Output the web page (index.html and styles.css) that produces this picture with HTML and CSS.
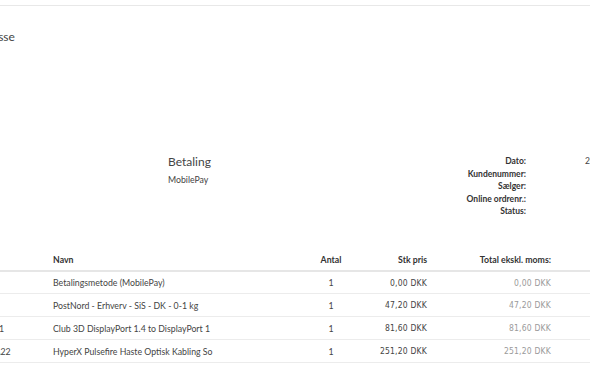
FILE: index.html
```html
<!DOCTYPE html>
<html lang="da">
<head>
    <meta charset="UTF-8" />
    <meta name="viewport" content="width=device-width, initial-scale=1" />
    <title>Ordre | Faktura</title>
    <link rel="stylesheet" href="styles.css">
</head>
<body>
    <div class="topbar"></div>
    <main class="page">
        <section class="address">
            <h2>Adresse</h2>
        </section>

        <section class="info-row">
            <div class="info-col delivery">
                <h3>Levering</h3>
                <p>PostNord - Erhverv - SiS - DK (0-1 kg)</p>
            </div>
            <div class="info-col payment">
                <h3>Betaling</h3>
                <p>MobilePay</p>
            </div>
            <dl class="meta">
                <dt>Dato:</dt><dd>2023-05-12</dd>
                <dt>Kundenummer:</dt><dd></dd>
                <dt>Sælger:</dt><dd></dd>
                <dt>Online ordrenr.:</dt><dd></dd>
                <dt>Status:</dt><dd></dd>
            </dl>
        </section>

        <table class="lines">
            <colgroup>
                <col class="c-sku">
                <col class="c-name">
                <col class="c-qty">
                <col class="c-price">
                <col class="c-total">
                <col class="c-rest">
            </colgroup>
            <thead>
                <tr>
                    <th class="sku">Varenr.</th>
                    <th>Navn</th>
                    <th class="center">Antal</th>
                    <th class="right">Stk pris</th>
                    <th class="right">Total ekskl. moms:</th>
                    <th></th>
                </tr>
            </thead>
            <tbody>
                <tr>
                    <td class="sku"></td>
                    <td>Betalingsmetode (MobilePay)</td>
                    <td class="center">1</td>
                    <td class="right money">0,00 DKK</td>
                    <td class="right money muted">0,00 DKK</td>
                    <td></td>
                </tr>
                <tr>
                    <td class="sku"></td>
                    <td>PostNord - Erhverv - SiS - DK - 0-1 kg</td>
                    <td class="center">1</td>
                    <td class="right money">47,20 DKK</td>
                    <td class="right money muted">47,20 DKK</td>
                    <td></td>
                </tr>
                <tr>
                    <td class="sku">CAC-1061</td>
                    <td>Club 3D DisplayPort 1.4 to DisplayPort 1</td>
                    <td class="center">1</td>
                    <td class="right money">81,60 DKK</td>
                    <td class="right money muted">81,60 DKK</td>
                    <td></td>
                </tr>
                <tr>
                    <td class="sku">4P5E3AA22</td>
                    <td>HyperX Pulsefire Haste Optisk Kabling So</td>
                    <td class="center">1</td>
                    <td class="right money">251,20 DKK</td>
                    <td class="right money muted">251,20 DKK</td>
                    <td></td>
                </tr>
            </tbody>
        </table>
    </main>
</body>
</html>
```

FILE: styles.css
```css
/* Basis */
* {
    box-sizing: border-box;
}
html, body {
    margin: 0;
    overflow: hidden;
}
body {
    font-family: Lato, "Open Sans", Arial, sans-serif;
    color: #444;
    background: #fff;
    width: 590px;
    height: 380px;
}
.topbar {
    height: 6px;
    border-bottom: 1px solid #e8e8e8;
}

/* Siden er bredere end vinduet og rykket til venstre */
.page {
    margin-left: -150px;
    width: 820px;
}

.address h2 {
    margin: 0;
    padding-top: 23px;
    padding-left: 123px;
    font-size: 12px;
    font-weight: 400;
    line-height: 16px;
}

/* Levering / betaling / info */
.info-row {
    display: grid;
    grid-template-columns: 318px 200px 1fr;
    margin-top: 109px;
}
.info-col h3 {
    margin: 0 0 4px;
    font-size: 12px;
    font-weight: 400;
    line-height: 16px;
}
.info-col p {
    margin: 0;
    font-size: 8.75px;
    line-height: 12px;
}
.delivery h3 {
    margin-left: -30px;
}
.delivery p {
    margin-left: -2px;
}
.meta {
    display: grid;
    grid-template-columns: 158px 1fr;
    column-gap: 59px;
    margin: 1px 0 0;
    font-size: 8.5px;
    line-height: 12.6px;
}
.meta dt {
    text-align: right;
    font-weight: 700;
    color: #333;
}
.meta dd {
    margin: 0;
}

/* Ordrelinjer */
.lines {
    margin-top: 36px;
    margin-left: 50px;
    border-collapse: collapse;
    table-layout: fixed;
    width: 740px;
    font-size: 8.75px;
}
.c-sku { width: 145px; }
.c-name { width: 255px; }
.c-qty { width: 62px; }
.c-price { width: 73px; }
.c-total { width: 124px; }
.lines th,
.lines td {
    padding: 0 8px;
    text-align: left;
    white-space: nowrap;
    overflow: hidden;
}
.lines .sku {
    padding-left: 63px;
}
.lines th {
    height: 17px;
    font-weight: 700;
    color: #333;
    border-bottom: 2px solid #e6e6e6;
    vertical-align: top;
}
.lines td {
    height: 23px;
    border-bottom: 1px solid #ececec;
}
.lines .center {
    text-align: center;
}
.lines .right {
    text-align: right;
}
.money {
    font-family: "Liberation Sans Narrow", "DejaVu Sans Condensed", sans-serif;
    font-size: 8.5px;
    letter-spacing: 0.2px;
}
.muted {
    color: #9a9a9a;
}
```
